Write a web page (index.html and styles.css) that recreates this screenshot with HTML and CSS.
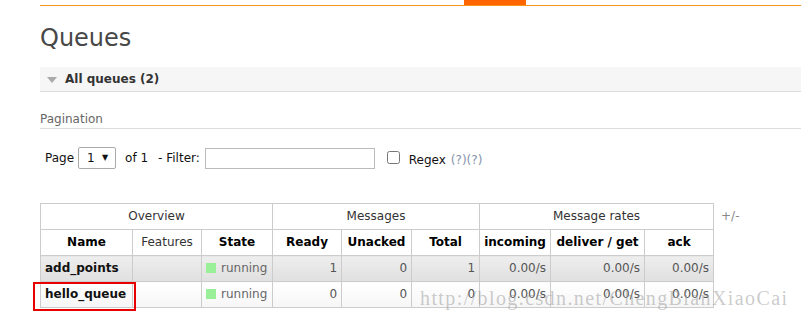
FILE: index.html
```html
<!DOCTYPE html>
<html lang="en">
<head>
    <meta charset="UTF-8">
    <title>Queues</title>
    <link rel="stylesheet" href="styles.css">
</head>
<body>
    <div class="topbar">
        <span class="tab-active"></span>
    </div>

    <div class="page">
        <h1>Queues</h1>

        <div class="section-head">
            <span class="toggle"></span>
            All queues (2)
        </div>

        <h3 class="subhead">Pagination</h3>

        <div class="pager">
            <span class="pager-label">Page</span>
            <span class="select-wrap">
                <select class="page-select"><option>1</option></select>
                <span class="select-arrow">&#9660;</span>
            </span>
            <span class="pager-of">of 1</span>
            <span class="pager-filter">- Filter:</span>
            <input type="text" class="filter">
            <label class="regex"><input type="checkbox" class="regex-box"> Regex</label>
            <span class="help">(?)(?)</span>
        </div>

        <div class="table-wrap">
            <table class="list">
                <colgroup>
                    <col class="c-name">
                    <col class="c-features">
                    <col class="c-state">
                    <col class="c-ready">
                    <col class="c-unacked">
                    <col class="c-total">
                    <col class="c-incoming">
                    <col class="c-deliver">
                    <col class="c-ack">
                </colgroup>
                <thead>
                    <tr>
                        <th colspan="3" class="group">Overview</th>
                        <th colspan="3" class="group">Messages</th>
                        <th colspan="3" class="group">Message rates</th>
                    </tr>
                    <tr>
                        <th>Name</th>
                        <th class="plain">Features</th>
                        <th>State</th>
                        <th>Ready</th>
                        <th>Unacked</th>
                        <th>Total</th>
                        <th>incoming</th>
                        <th>deliver / get</th>
                        <th>ack</th>
                    </tr>
                </thead>
                <tbody>
                    <tr class="alt1">
                        <td class="name">add_points</td>
                        <td></td>
                        <td class="state"><span class="dot"></span>running</td>
                        <td class="num">1</td>
                        <td class="num">0</td>
                        <td class="num">1</td>
                        <td class="num">0.00/s</td>
                        <td class="num">0.00/s</td>
                        <td class="num">0.00/s</td>
                    </tr>
                    <tr class="alt2">
                        <td class="name">hello_queue</td>
                        <td></td>
                        <td class="state"><span class="dot"></span>running</td>
                        <td class="num">0</td>
                        <td class="num">0</td>
                        <td class="num">0</td>
                        <td class="num">0.00/s</td>
                        <td class="num">0.00/s</td>
                        <td class="num">0.00/s</td>
                    </tr>
                </tbody>
            </table>
            <span class="toggle-cols">+/-</span>
            <!-- red annotation box around hello_queue -->
            <span class="mark"></span>
        </div>
    </div>

    <div class="watermark">http://blog.csdn.net/ChengBianXiaoCai</div>
</body>
</html>
```

FILE: styles.css
```css
html, body {
    overflow: hidden;
}

body {
    font-family: "DejaVu Sans", Verdana, sans-serif;
    font-size: 12px;
    margin: 0;
    padding: 0;
    background: white;
    color: #333;
    min-height: 318px;
    position: relative;
}

/* Orange nav line with the selected tab marker */
.topbar {
    margin-left: 40px;
    height: 5px;
    border-bottom: 1px solid #f7941d;
    display: flex;
}

.tab-active {
    margin-left: 424px;
    width: 62px;
    height: 5px;
    background: #ff6600;
}

.page {
    padding-left: 40px;
    padding-bottom: 11px;
}

h1 {
    margin: 18px 0 15px;
    font-size: 24px;
    line-height: 28px;
    font-weight: normal;
    color: #484848;
}

.section-head {
    height: 24px;
    line-height: 24px;
    background: #f6f6f6;
    border-bottom: 1px solid #ddd;
    font-weight: bold;
    color: #333;
    padding-left: 7px;
    display: flex;
    align-items: center;
}

.toggle {
    width: 0;
    height: 0;
    border-left: 5px solid transparent;
    border-right: 5px solid transparent;
    border-top: 6px solid #aaa;
    margin-right: 8px;
    margin-top: 2px;
}

.subhead {
    margin: 19px 0 0;
    font-size: 12px;
    line-height: 14px;
    font-weight: normal;
    color: #666;
    padding-top: 1px;
    padding-bottom: 2px;
    border-bottom: 1px solid #ddd;
}

.pager {
    margin-top: 18px;
    height: 22px;
    padding-left: 5px;
    display: flex;
    align-items: center;
    color: #111;
}

.select-wrap {
    position: relative;
    margin-left: 4px;
    width: 38px;
    height: 22px;
}

.page-select {
    appearance: none;
    -webkit-appearance: none;
    width: 38px;
    height: 22px;
    border: 1px solid #aaa;
    border-radius: 2px;
    background: white;
    font-family: "DejaVu Sans", Verdana, sans-serif;
    font-size: 12px;
    color: #111;
    padding: 0 0 0 8px;
    margin: 0;
}

.select-arrow {
    position: absolute;
    left: 24px;
    top: 6px;
    font-size: 8px;
    color: #111;
    pointer-events: none;
}

.pager-of {
    margin-left: 9px;
}

.pager-filter {
    margin-left: 10px;
}

.filter {
    margin-left: 5px;
    width: 170px;
    height: 21px;
    box-sizing: border-box;
    border: 1px solid #bbb;
    padding: 0 4px;
}

.regex {
    margin-left: 9px;
    display: flex;
    align-items: center;
    margin-top: 3px;
}

.regex-box {
    width: 13px;
    height: 13px;
    margin: -5px 9px 0 3px;
}

.help {
    margin-left: 5px;
    margin-top: 3px;
    color: #8494aa;
}

.table-wrap {
    margin-top: 34px;
    display: flex;
    align-items: flex-start;
    position: relative;
}

table.list {
    border-collapse: collapse;
    table-layout: fixed;
    width: 674px;
}

.c-name { width: 92px; }
.c-features { width: 69px; }
.c-state { width: 71px; }
.c-ready { width: 69px; }
.c-unacked { width: 70px; }
.c-total { width: 68px; }
.c-incoming { width: 71px; }
.c-deliver { width: 94px; }
.c-ack { width: 69px; }

table.list th,
table.list td {
    border: 1px solid #ccc;
    padding: 5px 4px;
    line-height: 15px;
    white-space: nowrap;
}

table.list th {
    background: white;
    color: #000;
    font-weight: bold;
    text-align: center;
}

table.list th.group,
table.list th.plain {
    font-weight: normal;
    color: #333;
}

table.list tr.alt1 td {
    background: linear-gradient(#eeeeee, #e0e0e0);
}

table.list tr.alt2 td {
    background: linear-gradient(#ffffff, #f6f6f6);
}

td.name {
    font-weight: bold;
    color: #111;
}

td.state {
    color: #666;
}

.dot {
    display: inline-block;
    width: 10px;
    height: 10px;
    background: #99f099;
    margin-right: 5px;
    vertical-align: -1px;
}

td.num {
    text-align: right;
    color: #555;
}

.mark {
    position: absolute;
    left: -7px;
    top: 79px;
    width: 99px;
    height: 25px;
    border: 2px solid #e60000;
}

.toggle-cols {
    margin-left: 7px;
    padding-top: 6px;
    color: #888;
}

.watermark {
    position: absolute;
    left: 420px;
    top: 288px;
    font-family: "Liberation Serif", "Times New Roman", serif;
    font-size: 20px;
    line-height: 20px;
    letter-spacing: 1.4px;
    color: rgba(140, 140, 140, 0.45);
    white-space: nowrap;
}
```
